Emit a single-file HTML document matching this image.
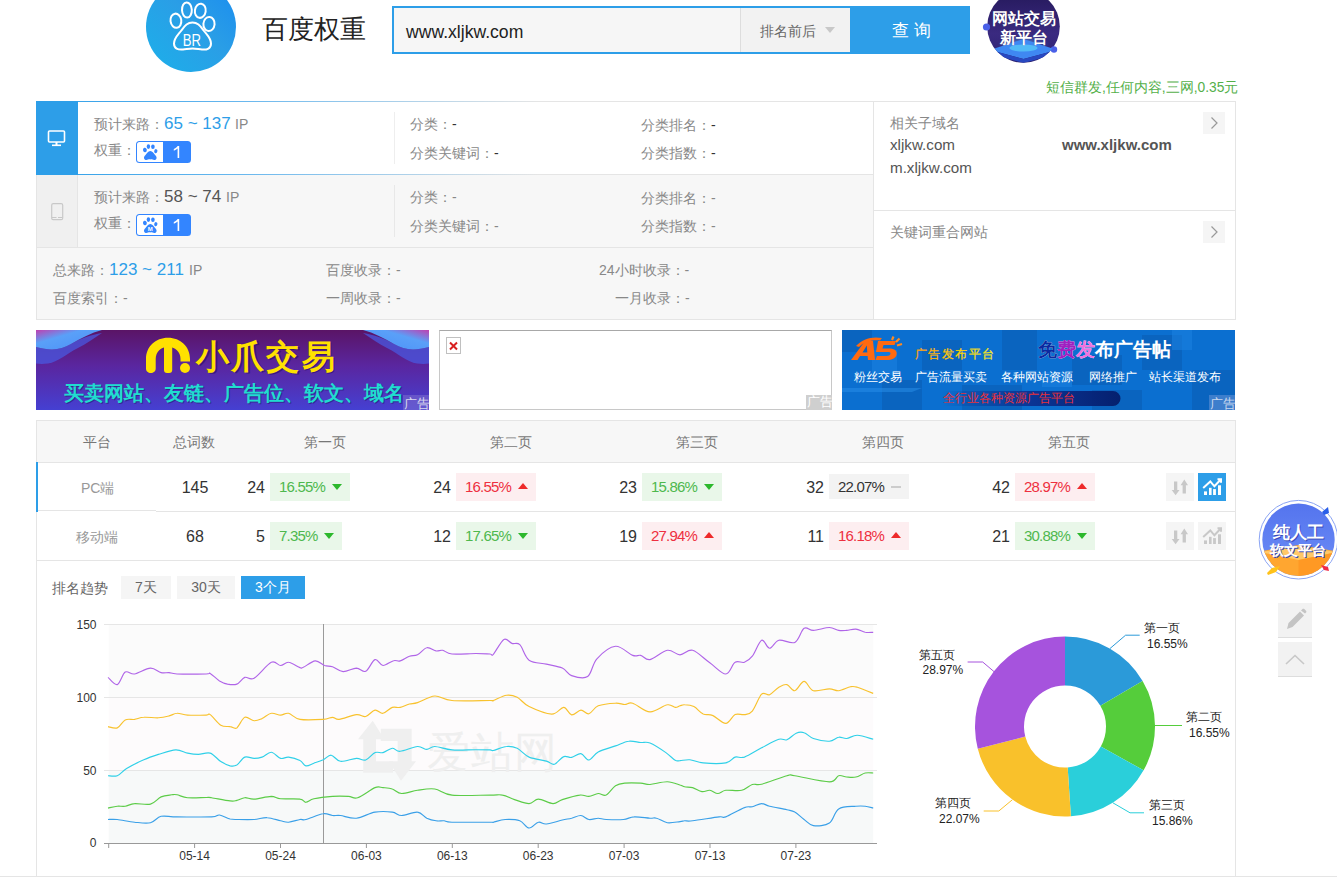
<!DOCTYPE html>
<html><head><meta charset="utf-8">
<style>
*{box-sizing:border-box;margin:0;padding:0}
html,body{width:1337px;height:885px;overflow:hidden;background:#fff}
body{position:relative;font-family:"Liberation Sans",sans-serif;color:#333;font-size:14px}
.a{position:absolute;white-space:nowrap}
.lbl{color:#888;font-size:14px;line-height:16px}
.dk{color:#333}
.th{top:433px;font-size:14px;line-height:18px;color:#777}
.plat{font-size:14px;line-height:18px;color:#999}
.num{font-size:16px;line-height:22px;color:#333}
.bd{height:28px;font-size:15px;line-height:28px;padding-left:9px;letter-spacing:-0.8px}
.bd i{position:absolute;top:11px;right:8px;width:0;height:0;border-left:5px solid transparent;border-right:5px solid transparent}
.bd.g{background:#e9f7e9;color:#4eb84e}.bd.g i{border-top:6px solid #2cb82c}
.bd.r{background:#fdeef0;color:#ee3040}.bd.r i{border-bottom:6px solid #ee2a2a;top:10px}
.bd.n{background:#f3f3f3;color:#333;height:25px;top:474px!important;line-height:25px}.bd.n i{border:none;width:10px;height:2px;background:#ccc;top:12px}
.tab{top:576px;height:23px;background:#f5f5f5;color:#666;font-size:14px;line-height:23px;text-align:center}
.tab.on{background:#2d9ee8;color:#fff}
</style></head><body>

<!-- ===== HEADER ===== -->
<div class="a" style="left:146px;top:-18px;width:90px;height:90px;border-radius:50%;background:linear-gradient(45deg,#1cb0ea 0%,#2a9ee6 55%,#1a8cf0 100%)"></div>
<svg class="a" style="left:146px;top:-18px" width="90" height="90" viewBox="0 0 90 90">
 <g fill="none" stroke="#fff" stroke-width="2">
  <ellipse cx="29.9" cy="38.7" rx="5.4" ry="7.1" transform="rotate(-8 29.9 38.7)"/>
  <ellipse cx="40.9" cy="28" rx="4.9" ry="7.6" transform="rotate(-3 40.9 28)"/>
  <ellipse cx="54.3" cy="28.8" rx="5.4" ry="7.1" transform="rotate(8 54.3 28.8)"/>
  <ellipse cx="63" cy="42" rx="5.6" ry="7.1" transform="rotate(5 63 42)"/>
  <path d="M46.5 40.4 C41 40.4 38.5 44.5 35 49 C31 54 28 56.5 28 61.5 C28 66.5 32 68 37 67.5 C40.5 67.2 43 66.5 46.5 66.5 C50 66.5 52.5 67.2 56 67.5 C61 68 65 66.5 65 61.5 C65 56.5 62 54 58 49 C54.5 44.5 52 40.4 46.5 40.4 Z"/>
 </g>
 <text x="36.7" y="64" fill="#fff" font-family="Liberation Sans" font-size="17" textLength="18.3" lengthAdjust="spacingAndGlyphs">BR</text>
</svg>
<div class="a" style="left:261.5px;top:12px;font-size:26.4px;line-height:34px;color:#222">百度权重</div>

<div class="a" style="left:392px;top:6px;width:578px;height:48px;border:2px solid #2d9ee8;background:#f6f6f6"></div>
<div class="a" style="left:406px;top:20.5px;font-size:17.6px;line-height:22px;color:#222">www.xljkw.com</div>
<div class="a" style="left:740px;top:8px;width:110px;height:44px;background:#f2f2f2;border-left:1px solid #ddd"></div>
<div class="a" style="left:760px;top:22px;font-size:14px;line-height:18px;color:#666">排名前后</div>
<div class="a" style="left:825px;top:27px;width:0;height:0;border-left:5px solid transparent;border-right:5px solid transparent;border-top:6px solid #c8c8c8"></div>
<div class="a" style="left:850px;top:6px;width:120px;height:48px;background:#2d9ee8"></div>
<div class="a" style="left:892px;top:20px;font-size:17px;line-height:22px;color:#fff">查 询</div>

<!-- badge top-right -->
<svg class="a" style="left:980px;top:-12px" width="90" height="80" viewBox="0 0 90 80">
 <defs><linearGradient id="bg1" x1="0" y1="0" x2="0" y2="1"><stop offset="0" stop-color="#24185a"/><stop offset=".6" stop-color="#3a2a80"/><stop offset="1" stop-color="#2a2070"/></linearGradient>
 <radialGradient id="glow" cx=".5" cy=".5" r=".5"><stop offset="0" stop-color="#60d0ff"/><stop offset="1" stop-color="#3a70e0" stop-opacity="0"/></radialGradient></defs>
 <circle cx="43.5" cy="38.5" r="36.3" fill="url(#bg1)"/>
 <circle cx="6.5" cy="39" r="3.6" fill="#4a60e8"/>
 <circle cx="74" cy="61.5" r="3.2" fill="#4a60e8"/>
 <clipPath id="bclip"><circle cx="43.5" cy="38.5" r="36.3"/></clipPath>
 <g clip-path="url(#bclip)">
 <ellipse cx="43.5" cy="56" rx="26" ry="9" fill="url(#glow)" opacity=".8"/>
 <path d="M10 62 L43.5 51 L77 62 L43.5 71 Z" fill="#3f88f2"/>
 <path d="M10 62 L43.5 71 L77 62 L77 66 L43.5 75 L10 66 Z" fill="#2848c0"/>
 <ellipse cx="43.5" cy="60" rx="14" ry="3.5" fill="#5ad0fa" opacity=".7"/>
 </g>
 <text x="44" y="36" text-anchor="middle" fill="#1a1040" font-weight="bold" font-size="15.5" font-family="Liberation Sans" opacity=".6">网站交易</text>
 <text x="43.5" y="35.5" text-anchor="middle" fill="#fff" font-weight="bold" font-size="15.5" font-family="Liberation Sans">网站交易</text>
 <text x="44" y="55" text-anchor="middle" fill="#1a1040" font-weight="bold" font-size="15.5" font-family="Liberation Sans" opacity=".6">新平台</text>
 <text x="43.5" y="54.5" text-anchor="middle" fill="#fff" font-weight="bold" font-size="15.5" font-family="Liberation Sans">新平台</text>
</svg>

<div class="a" style="left:1046px;top:78.5px;font-size:13.8px;line-height:18px;color:#54b04a">短信群发,任何内容,三网,0.35元</div>

<!-- ===== INFO BOX ===== -->
<div class="a" style="left:36px;top:101px;width:1200px;height:219px;border:1px solid #e5e5e5;background:#fff"></div>
<!-- PC row -->
<div class="a" style="left:36px;top:101px;width:838px;height:74px;background:#fff"></div>
<div class="a" style="left:36px;top:101px;width:838px;height:1px;background:linear-gradient(to right,#2d9ee8 0%,#6ab8ee 25%,#e5e5e5 60%)"></div>
<div class="a" style="left:36px;top:174px;width:838px;height:1px;background:linear-gradient(to right,#2d9ee8 0%,#6ab8ee 25%,#e5e5e5 60%)"></div>
<div class="a" style="left:36px;top:101px;width:42px;height:74px;background:#2d9ee8"></div>
<svg class="a" style="left:47px;top:130px" width="19" height="17" viewBox="0 0 19 17"><rect x="1.5" y="1" width="16" height="11" rx="1" fill="none" stroke="#fff" stroke-width="1.6"/><rect x="8.5" y="12" width="2" height="3" fill="#fff"/><rect x="5" y="14.5" width="9" height="1.6" fill="#fff"/></svg>
<!-- mobile row -->
<div class="a" style="left:37px;top:175px;width:836px;height:73px;background:#f7f7f7;border-bottom:1px solid #e5e5e5"></div>
<div class="a" style="left:37px;top:175px;width:40px;height:72px;background:#f0f0f0"></div>
<div class="a" style="left:77px;top:175px;width:1px;height:72px;background:#e5e5e5"></div>
<svg class="a" style="left:51px;top:203px" width="13" height="18" viewBox="0 0 13 18"><rect x="0.7" y="0.7" width="11" height="16" rx="1.5" fill="none" stroke="#c8c8c8" stroke-width="1.2"/><path d="M1 14.5 H5.5 M7 14.5 H11.5" stroke="#c8c8c8" stroke-width="1.2"/></svg>
<!-- totals row -->
<div class="a" style="left:37px;top:248px;width:836px;height:72px;background:#f7f7f7;border-bottom:1px solid #e5e5e5"></div>
<div class="a" style="left:873px;top:101px;width:1px;height:219px;background:#e5e5e5"></div>

<!-- row1 text -->
<div class="a lbl" style="left:94px;top:116px">预计来路：</div>
<div class="a" style="left:164px;top:113px;font-size:17px;line-height:22px;color:#2d9ee8">65 ~ 137</div>
<div class="a lbl" style="left:235px;top:116px">IP</div>
<div class="a lbl" style="left:94px;top:142px">权重：</div>
<svg class="a" style="left:136px;top:141px" width="56" height="22" viewBox="0 0 56 22"><rect x="0" y="0" width="55" height="22" rx="3.5" fill="#3385ff"/><path d="M3.5 1 H27 V21 H3.5 A2.5 2.5 0 0 1 1 18.5 V3.5 A2.5 2.5 0 0 1 3.5 1 Z" fill="#fff"/><g fill="#3385ff"><ellipse cx="8.9" cy="9" rx="1.9" ry="2.2" transform="rotate(-15 8.9 9)"/><ellipse cx="12.4" cy="5.6" rx="1.7" ry="2.4"/><ellipse cx="16.9" cy="5.7" rx="1.8" ry="2.3"/><ellipse cx="19.8" cy="10.2" rx="1.6" ry="2.1" transform="rotate(15 19.8 10.2)"/><path d="M14.3 10 C12 10 10.8 12.5 9.5 14 C8 15.5 7.8 16.5 8.2 17.7 C8.7 19 10.5 19.2 12 18.6 C13 18.2 13.7 18 14.3 18.4 C15 18 15.6 18.2 16.6 18.6 C18.1 19.2 19.9 19 20.4 17.7 C20.8 16.5 20.6 15.5 19.1 14 C17.8 12.5 16.6 10 14.3 10 Z"/></g><path d="M41.6 5 H43.2 V17 H41.6 V7.6 C40.6 8.6 39.3 9.3 37.8 9.7 V8.1 C39.3 7.5 40.8 6.3 41.6 5 Z" fill="#fff"/></svg>
<div class="a" style="left:394px;top:112px;width:1px;height:52px;background:#eee"></div>
<div class="a lbl" style="left:410px;top:116px">分类：<span class="dk">-</span></div>
<div class="a lbl" style="left:410px;top:145px">分类关键词：<span class="dk">-</span></div>
<div class="a lbl" style="left:641px;top:117px">分类排名：<span class="dk">-</span></div>
<div class="a lbl" style="left:641px;top:145px">分类指数：<span class="dk">-</span></div>

<!-- row2 text -->
<div class="a lbl" style="left:94px;top:189px">预计来路：</div>
<div class="a" style="left:164px;top:186px;font-size:17px;line-height:22px;color:#555">58 ~ 74</div>
<div class="a lbl" style="left:226px;top:189px">IP</div>
<div class="a lbl" style="left:94px;top:215px">权重：</div>
<svg class="a" style="left:136px;top:214px" width="56" height="22" viewBox="0 0 56 22"><rect x="0" y="0" width="55" height="22" rx="3.5" fill="#3385ff"/><path d="M3.5 1 H27 V21 H3.5 A2.5 2.5 0 0 1 1 18.5 V3.5 A2.5 2.5 0 0 1 3.5 1 Z" fill="#fff"/><g fill="#3385ff"><ellipse cx="8.9" cy="9" rx="1.9" ry="2.2" transform="rotate(-15 8.9 9)"/><ellipse cx="12.4" cy="5.6" rx="1.7" ry="2.4"/><ellipse cx="16.9" cy="5.7" rx="1.8" ry="2.3"/><ellipse cx="19.8" cy="10.2" rx="1.6" ry="2.1" transform="rotate(15 19.8 10.2)"/><path d="M14.3 10 C12 10 10.8 12.5 9.5 14 C8 15.5 7.8 16.5 8.2 17.7 C8.7 19 10.5 19.2 12 18.6 C13 18.2 13.7 18 14.3 18.4 C15 18 15.6 18.2 16.6 18.6 C18.1 19.2 19.9 19 20.4 17.7 C20.8 16.5 20.6 15.5 19.1 14 C17.8 12.5 16.6 10 14.3 10 Z"/></g><text x="14.2" y="16.8" text-anchor="middle" fill="#fff" font-size="6" font-family="Liberation Sans" font-weight="bold">M</text><path d="M41.6 5 H43.2 V17 H41.6 V7.6 C40.6 8.6 39.3 9.3 37.8 9.7 V8.1 C39.3 7.5 40.8 6.3 41.6 5 Z" fill="#fff"/></svg>
<div class="a" style="left:394px;top:185px;width:1px;height:52px;background:#e8e8e8"></div>
<div class="a lbl" style="left:410px;top:189px">分类：<span>-</span></div>
<div class="a lbl" style="left:410px;top:218px">分类关键词：<span>-</span></div>
<div class="a lbl" style="left:641px;top:190px">分类排名：<span>-</span></div>
<div class="a lbl" style="left:641px;top:218px">分类指数：<span>-</span></div>

<!-- totals text -->
<div class="a lbl" style="left:53px;top:262px">总来路：</div>
<div class="a" style="left:109px;top:259px;font-size:17px;line-height:22px;color:#2d9ee8">123 ~ 211</div>
<div class="a lbl" style="left:189px;top:262px">IP</div>
<div class="a lbl" style="left:53px;top:290px">百度索引：<span>-</span></div>
<div class="a lbl" style="left:326px;top:262px">百度收录：<span>-</span></div>
<div class="a lbl" style="left:326px;top:290px">一周收录：<span>-</span></div>
<div class="a lbl" style="left:599px;top:262px">24小时收录：<span>-</span></div>
<div class="a lbl" style="left:615px;top:290px">一月收录：<span>-</span></div>

<!-- right panel -->
<div class="a lbl" style="left:890px;top:115px">相关子域名</div>
<div class="a" style="left:1203px;top:112px;width:22px;height:22px;background:#f5f5f5"></div>
<svg class="a" style="left:1203px;top:112px" width="22" height="22" viewBox="0 0 22 22"><path d="M8.5 5.5 L14 11 L8.5 16.5" fill="none" stroke="#999" stroke-width="1.2"/></svg>
<div class="a" style="left:890px;top:136px;font-size:15.2px;line-height:18px;color:#555">xljkw.com</div>
<div class="a" style="left:1062px;top:136px;font-size:15px;line-height:18px;color:#555;font-weight:bold">www.xljkw.com</div>
<div class="a" style="left:890px;top:159px;font-size:15.2px;line-height:18px;color:#555">m.xljkw.com</div>
<div class="a" style="left:874px;top:210px;width:361px;height:1px;background:#e5e5e5"></div>
<div class="a lbl" style="left:890px;top:224px">关键词重合网站</div>
<div class="a" style="left:1203px;top:221px;width:22px;height:22px;background:#f5f5f5"></div>
<svg class="a" style="left:1203px;top:221px" width="22" height="22" viewBox="0 0 22 22"><path d="M8.5 5.5 L14 11 L8.5 16.5" fill="none" stroke="#999" stroke-width="1.2"/></svg>

<!-- ===== ADS ===== -->
<svg class="a" style="left:36px;top:330px" width="393" height="80" viewBox="0 0 393 80">
 <defs>
  <linearGradient id="ad1g" x1="0" y1="0" x2="0" y2="1"><stop offset="0" stop-color="#5a1466"/><stop offset=".45" stop-color="#5a26a0"/><stop offset="1" stop-color="#4540d2"/></linearGradient>
  <linearGradient id="wv" x1="0" y1="0" x2="1" y2="0"><stop offset="0" stop-color="#b048c8"/><stop offset=".25" stop-color="#5aa0f8"/><stop offset=".7" stop-color="#4a80f0"/><stop offset="1" stop-color="#c03aa8"/></linearGradient>
  <linearGradient id="wv2" x1="1" y1="0" x2="0" y2="0"><stop offset="0" stop-color="#c03aa8"/><stop offset=".3" stop-color="#5aa0f8"/><stop offset=".7" stop-color="#4a80f0"/><stop offset="1" stop-color="#8a40c0"/></linearGradient>
 </defs>
 <rect width="393" height="80" fill="url(#ad1g)"/>
 <linearGradient id="wvd" x1="0" y1="0" x2="1" y2="1"><stop offset="0" stop-color="#c040b0"/><stop offset=".35" stop-color="#5aa0f8"/><stop offset="1" stop-color="#4a90f8"/></linearGradient>
 <linearGradient id="wvd2" x1="1" y1="0" x2="0" y2="1"><stop offset="0" stop-color="#c040b0"/><stop offset=".35" stop-color="#5aa0f8"/><stop offset="1" stop-color="#4a90f8"/></linearGradient>
 <path d="M0 17 C15 21 25 20 35 14 C45 8 55 5 66 3 C58 8 50 14 42 18 C30 24 22 32 12 33.5 C7 34.2 3 34 0 33.5 Z" fill="#4a58e0" opacity=".75"/>
 <path d="M0 0 H66 C55 3 45 8 35 14 C25 20 15 21 0 17 Z" fill="url(#wvd)"/>
 <path d="M393 17 C378 21 368 20 358 14 C348 8 338 5 327 3 C335 8 343 14 351 18 C363 24 371 32 381 33.5 C386 34.2 390 34 393 33.5 Z" fill="#4a58e0" opacity=".75"/>
 <path d="M393 0 H327 C338 3 348 8 358 14 C368 20 378 21 393 17 Z" fill="url(#wvd2)"/>
 <g fill="#ffe100">
  <path d="M110 38.5 V29 C110 16.5 119.5 7.7 132 7.7 C144.5 7.7 154 16.5 154 29 V31.5 H144.5 V29 C144.5 22 139 16.8 132 16.8 C125 16.8 119.7 22 119.7 29 V38.5 C119.7 41.3 117.5 43 114.8 43 C112.2 43 110 41.3 110 38.5 Z"/>
  <rect x="128" y="12" width="8.2" height="31" rx="3"/>
  <circle cx="149" cy="38" r="5"/>
 </g>
 <text x="161.5" y="39" fill="#2a1060" opacity=".6" font-size="33" letter-spacing="2.2" font-weight="bold" font-family="Liberation Sans">小爪交易</text>
 <text x="160" y="37.5" fill="#ffe100" font-size="33" letter-spacing="2.2" font-weight="bold" font-family="Liberation Sans">小爪交易</text>
 <text x="28.5" y="71" fill="#2a1a70" opacity=".6" font-size="19.8" font-weight="bold" font-family="Liberation Sans">买卖网站、友链、广告位、软文、域名</text>
 <text x="27.5" y="69.5" fill="#20dcd0" font-size="19.8" font-weight="bold" font-family="Liberation Sans">买卖网站、友链、广告位、软文、域名</text>
 <rect x="367" y="65" width="26" height="15" fill="#8a7ad0" opacity=".45"/>
 <text x="367.5" y="77.5" fill="#d8d8ee" font-size="12.5" font-family="Liberation Sans">广告</text>
</svg>

<div class="a" style="left:439px;top:330px;width:393px;height:80px;border:1px solid #c8c8c8;border-top-color:#a8a8a8;background:#fff"></div>
<svg class="a" style="left:446px;top:337px" width="15" height="17" viewBox="0 0 15 17"><rect x="0.5" y="0.5" width="14" height="16" fill="#fff" stroke="#c0c0c0"/><path d="M4 5.5 L11 12.5 M11 5.5 L4 12.5" stroke="#d82020" stroke-width="2"/></svg>
<div class="a" style="left:806px;top:395px;width:26px;height:15px;background:#cfcfcf"></div>
<div class="a" style="left:806.5px;top:395px;font-size:12.5px;line-height:15px;color:#fff">广告</div>

<svg class="a" style="left:842px;top:330px" width="393" height="80" viewBox="0 0 393 80">
 <defs><linearGradient id="pill" x1="0" y1="0" x2="1" y2="0"><stop offset="0" stop-color="#0a2a8a" stop-opacity="0"/><stop offset=".5" stop-color="#0a2a8a" stop-opacity=".85"/><stop offset="1" stop-color="#05206e"/></linearGradient></defs>
 <rect width="393" height="80" fill="#0b6fd0"/>
 <g fill="#0a62bc" opacity=".8">
  <rect x="0" y="0" width="30" height="22"/><rect x="80" y="10" width="40" height="30"/><rect x="160" y="0" width="35" height="40"/>
  <rect x="230" y="25" width="50" height="30"/><rect x="300" y="5" width="40" height="35"/><rect x="350" y="40" width="43" height="40"/>
  <rect x="40" y="50" width="40" height="30"/><rect x="120" y="55" width="60" height="25"/><rect x="250" y="60" width="50" height="20"/>
 </g>
 <g fill="#1a80e0" opacity=".6">
  <rect x="30" y="20" width="25" height="25"/><rect x="200" y="42" width="30" height="15"/><rect x="330" y="0" width="20" height="20"/>
 </g>
 <path d="M0 58 H80 L70 62 H0 Z" fill="#2a90ea" opacity=".5"/>
 <g fill="#ff6a10">
  <path d="M9 30 L23 11 H31 L33 30 H26 L25.6 26 H18 L15.5 30 Z M20.5 22.5 H25.3 L24.8 15.5 Z"/>
  <path d="M36 11 H54 L52.5 15 H41.5 L40.5 18.5 H47 C53 18.5 55.5 21 54.5 25 C53.5 28.5 50 30 45 30 H33.5 L35 26 H44.5 C47 26 48 25.3 48.4 24 C48.8 22.6 48 22 45.5 22 H34 Z"/>
  <path d="M14 16 C20 9 30 6 40 8 L38 10.5 C30 9.5 22 12 17 17 Z"/>
 </g>
 <path d="M50 10 L51.5 6.5 M54 12 L57.5 8.5 M55 15.5 L60 14" stroke="#ff8a20" stroke-width="2.2"/>
 <linearGradient id="ggy" x1="0" y1="0" x2="1" y2="0"><stop offset="0" stop-color="#ff9a10"/><stop offset=".5" stop-color="#ffd000"/><stop offset="1" stop-color="#f0f020"/></linearGradient><text x="72.5" y="27.5" font-size="12" font-family="Liberation Sans" letter-spacing="1.6" fill="url(#ggy)" stroke="url(#ggy)" stroke-width="0.25">广告发布平台</text>
 <text x="196" y="25.5" font-size="18.7" font-weight="bold" font-family="Liberation Sans" fill="#fff">免费发布广告帖</text>
 <text x="196" y="25.5" font-size="18.7" font-weight="bold" font-family="Liberation Sans" fill="#0a2aa0">免</text>
 <text x="214.9" y="25.5" font-size="18.7" font-weight="bold" font-family="Liberation Sans" fill="#a020c0">费</text>
 <text x="233.6" y="25.5" font-size="18.7" font-weight="bold" font-family="Liberation Sans" fill="#f070e0">发</text>
 <text x="12" y="51" font-size="12.45" font-family="Liberation Sans" fill="#fff">粉丝交易</text>
 <text x="73.3" y="51" font-size="12.45" font-family="Liberation Sans" fill="#fff">广告流量买卖</text>
 <text x="159.3" y="51" font-size="12.45" font-family="Liberation Sans" fill="#fff">各种网站资源</text>
 <text x="246.6" y="51" font-size="12.45" font-family="Liberation Sans" fill="#fff">网络推广</text>
 <text x="307" y="51" font-size="12.45" font-family="Liberation Sans" fill="#fff">站长渠道发布</text>
 <path d="M100 61 H271 A7.5 7.5 0 0 1 271 76 H100 Z" fill="url(#pill)"/>
 <text x="101" y="72" font-size="12.25" font-family="Liberation Sans" fill="#e8303a">全行业各种资源广告平台</text>
 <rect x="367" y="65" width="26" height="15" fill="#4a84d0" opacity=".8"/>
 <text x="367.5" y="77.5" fill="#c8d8ee" font-size="12.5" font-family="Liberation Sans">广告</text>
</svg>

<!-- ===== TABLE ===== -->
<div class="a" style="left:36px;top:420px;width:1200px;height:141px;border:1px solid #e5e5e5;border-bottom:none;background:#fff"></div>
<div class="a" style="left:37px;top:421px;width:1198px;height:42px;background:#f7f7f7;border-bottom:1px solid #e5e5e5"></div>
<div class="a" style="left:156px;top:511px;width:1079px;height:1px;background:#e5e5e5"></div>
<div class="a" style="left:38px;top:510px;width:118px;height:1px;background:#e5e5e5"></div>
<div class="a" style="left:37px;top:560px;width:1198px;height:1px;background:#e5e5e5"></div>
<div class="a" style="left:36px;top:462px;width:2px;height:50px;background:#2d9ee8"></div>
<div class="a th" style="left:83px">平台</div>
<div class="a th" style="left:173px">总词数</div>
<div class="a th" style="left:304px">第一页</div>
<div class="a th" style="left:490px">第二页</div>
<div class="a th" style="left:676px">第三页</div>
<div class="a th" style="left:862px">第四页</div>
<div class="a th" style="left:1048px">第五页</div>

<div class="a plat" style="left:81px;top:479px">PC端</div>
<div class="a plat" style="left:76px;top:528px">移动端</div>
<div class="a num" style="left:160px;width:70px;text-align:center;top:477px">145</div>
<div class="a num" style="left:160px;width:70px;text-align:center;top:526px">68</div>
<div class="a num" style="left:191px;width:74px;text-align:right;top:477px">24</div>
<div class="a bd g" style="left:270px;top:473px;width:80px">16.55%<i></i></div>
<div class="a num" style="left:377px;width:74px;text-align:right;top:477px">24</div>
<div class="a bd r" style="left:456px;top:473px;width:80px">16.55%<i></i></div>
<div class="a num" style="left:563px;width:74px;text-align:right;top:477px">23</div>
<div class="a bd g" style="left:642px;top:473px;width:80px">15.86%<i></i></div>
<div class="a num" style="left:750px;width:74px;text-align:right;top:477px">32</div>
<div class="a bd n" style="left:829px;top:473px;width:80px">22.07%<i></i></div>
<div class="a num" style="left:936px;width:74px;text-align:right;top:477px">42</div>
<div class="a bd r" style="left:1015px;top:473px;width:80px">28.97%<i></i></div>
<div class="a num" style="left:191px;width:74px;text-align:right;top:526px">5</div>
<div class="a bd g" style="left:270px;top:522px;width:72px">7.35%<i></i></div>
<div class="a num" style="left:377px;width:74px;text-align:right;top:526px">12</div>
<div class="a bd g" style="left:456px;top:522px;width:80px">17.65%<i></i></div>
<div class="a num" style="left:563px;width:74px;text-align:right;top:526px">19</div>
<div class="a bd r" style="left:642px;top:522px;width:80px">27.94%<i></i></div>
<div class="a num" style="left:750px;width:74px;text-align:right;top:526px">11</div>
<div class="a bd r" style="left:829px;top:522px;width:80px">16.18%<i></i></div>
<div class="a num" style="left:936px;width:74px;text-align:right;top:526px">21</div>
<div class="a bd g" style="left:1015px;top:522px;width:80px">30.88%<i></i></div>

<div class="a" style="left:1166px;top:473px;width:28px;height:28px;background:#f5f5f5"></div>
<div class="a" style="left:1198px;top:473px;width:28px;height:28px;background:#2d9ee8"></div>
<div class="a" style="left:1166px;top:522px;width:28px;height:28px;background:#f5f5f5"></div>
<div class="a" style="left:1198px;top:522px;width:28px;height:28px;background:#f5f5f5"></div>
<svg class="a" style="left:1166px;top:473px" width="28" height="28" viewBox="0 0 28 28"><g fill="#c8c8c8"><path d="M8 8.4 H11.3 V17 H13.5 L9.6 22.2 L5.7 17 H8 Z"/><path d="M18.3 6.4 L22 12.3 H19.9 V20.4 H16.6 V12.3 H14.6 Z"/></g></svg>
<svg class="a" style="left:1166px;top:522px" width="28" height="28" viewBox="0 0 28 28"><g fill="#c8c8c8"><path d="M8 8.4 H11.3 V17 H13.5 L9.6 22.2 L5.7 17 H8 Z"/><path d="M18.3 6.4 L22 12.3 H19.9 V20.4 H16.6 V12.3 H14.6 Z"/></g></svg>
<svg class="a" style="left:1198px;top:473px;color:#fff" width="28" height="28" viewBox="0 0 28 28"><g fill="#fff"><rect x="6" y="18.4" width="3" height="3.6"/><rect x="11" y="14.8" width="2.6" height="7.2"/><rect x="15.1" y="16.1" width="2.8" height="5.9"/><rect x="20" y="12.3" width="3" height="9.7"/></g><path d="M5.2 15 L12.3 8.4 L16.4 13.3 L23 6.2 M19.5 6.2 H23 V9.7" fill="none" stroke="currentColor" stroke-width="2"/><g></g></svg>
<svg class="a" style="left:1198px;top:522px;color:#c8c8c8" width="28" height="28" viewBox="0 0 28 28"><g fill="#c8c8c8"><rect x="6" y="18.4" width="3" height="3.6"/><rect x="11" y="14.8" width="2.6" height="7.2"/><rect x="15.1" y="16.1" width="2.8" height="5.9"/><rect x="20" y="12.3" width="3" height="9.7"/></g><path d="M5.2 15 L12.3 8.4 L16.4 13.3 L23 6.2 M19.5 6.2 H23 V9.7" fill="none" stroke="currentColor" stroke-width="2"/><g></g></svg>

<!-- ===== CHART ===== -->
<div class="a" style="left:36px;top:561px;width:1200px;height:316px;border:1px solid #e5e5e5;border-top:none;background:#fff"></div>
<div class="a" style="left:52px;top:579px;font-size:14px;line-height:18px;color:#666">排名趋势</div>
<div class="a tab" style="left:121px;width:50px">7天</div>
<div class="a tab" style="left:177px;width:58px">30天</div>
<div class="a tab on" style="left:241px;width:64px">3个月</div>
<svg class="a" style="left:0;top:0" width="1337" height="885" viewBox="0 0 1337 885">
 <rect x="108.7" y="624.4" width="764.5" height="72.9" fill="#fbfbfb"/>
 <rect x="108.7" y="697.3" width="764.5" height="72.8" fill="#fdfbfc"/>
 <rect x="108.7" y="770.1" width="764.5" height="72.9" fill="#f7f9f9"/>
 <g stroke="#e6e6e6" stroke-width="1"><path d="M104 624.5 H877 M104 697.5 H877 M104 770.5 H877"/></g>
 <g fill="#efefef">
  <path d="M372.7 720.8 L384.4 739.3 H376 V761.3 H393 V772.8 H363.2 V739.3 H358 Z"/>
  <path d="M380.8 728.7 H411.7 V761.3 H416 L401 780.7 L388.8 761.3 H397.6 V741 H380.8 Z"/>
 </g>
 <text x="427" y="766.5" font-size="42.5" fill="#efefef" font-family="Liberation Sans" letter-spacing="0.5">爱站网</text>
 <path d="M323.5 624 V843" stroke="#9a9a9a" stroke-width="1"/>
 <g fill="none" stroke-width="1.15" stroke-linejoin="round">
<path d="M108.0 819.5 C109.5 819.5 112.8 819.1 117.3 819.5 C121.7 820.0 129.0 821.6 134.5 822.2 C140.1 822.7 146.0 823.7 150.5 822.7 C154.9 821.7 156.7 817.3 161.1 816.3 C165.5 815.4 168.6 816.8 177.0 816.9 C185.4 816.9 204.5 817.2 211.6 816.9 C218.6 816.5 216.4 814.6 219.5 815.0 C222.6 815.4 227.0 818.2 230.1 819.0 C233.2 819.7 234.1 819.4 238.1 819.5 C242.1 819.6 249.2 819.8 254.1 819.5 C258.9 819.2 262.9 817.4 267.3 817.7 C271.8 817.9 277.1 820.1 280.6 820.8 C284.2 821.6 285.3 822.4 288.6 822.2 C291.8 821.9 297.1 820.0 300.0 819.5 C302.9 819.1 302.1 820.5 305.9 819.5 C309.8 818.5 318.8 814.3 323.2 813.7 C327.6 813.0 329.6 815.2 332.5 815.5 C335.4 815.8 336.5 815.1 340.5 815.5 C344.4 816.0 350.6 818.8 356.4 818.2 C362.2 817.6 369.0 813.1 375.0 812.1 C381.0 811.1 387.8 811.5 392.3 812.1 C396.7 812.7 397.3 815.5 401.6 815.5 C405.8 815.5 413.3 811.6 417.5 812.1 C421.7 812.5 423.7 816.7 426.8 818.2 C429.9 819.6 433.2 820.4 436.1 820.8 C439.0 821.3 441.4 820.6 444.1 820.8 C446.7 821.1 444.4 821.9 452.0 822.2 C459.7 822.4 483.1 822.2 490.0 822.2 C496.9 822.2 490.7 822.6 493.3 822.2 C495.8 821.7 500.8 819.7 505.2 819.5 C509.7 819.3 515.9 819.4 519.8 820.8 C523.8 822.3 526.0 827.8 529.1 828.0 C532.2 828.2 535.6 822.8 538.4 822.2 C541.3 821.5 542.4 824.4 546.4 824.0 C550.4 823.7 558.1 821.0 562.3 820.0 C566.5 819.1 568.5 818.9 571.6 818.2 C574.7 817.4 578.1 815.3 580.9 815.5 C583.8 815.8 586.0 819.1 588.9 819.5 C591.8 820.0 595.3 818.2 598.2 818.2 C601.1 818.2 602.0 819.3 606.2 819.5 C610.4 819.7 618.8 820.0 623.4 819.5 C628.1 819.1 629.6 817.1 634.1 816.9 C638.5 816.6 646.2 818.0 650.0 818.2 C653.7 818.4 653.7 817.4 656.6 818.2 C659.5 818.9 663.4 822.1 667.3 822.7 C671.1 823.3 677.1 821.9 680.0 821.6 C682.9 821.3 682.5 821.0 684.6 820.8 C686.7 820.7 686.8 821.5 692.6 820.8 C698.3 820.2 713.6 817.5 719.1 816.9 C724.7 816.2 721.6 818.4 725.8 816.9 C730.0 815.3 739.9 809.2 744.4 807.6 C748.8 805.9 749.5 807.4 752.3 806.8 C755.2 806.1 758.8 803.7 761.6 803.6 C764.5 803.5 765.4 805.2 769.6 806.2 C773.8 807.3 782.7 808.7 786.9 809.7 C791.1 810.7 792.0 810.4 794.8 812.1 C797.7 813.7 801.0 817.3 804.1 819.5 C807.2 821.8 809.2 825.0 813.4 825.6 C817.6 826.2 825.2 825.8 829.4 823.0 C833.6 820.2 834.2 811.7 838.7 808.9 C843.1 806.1 851.5 806.7 855.9 806.2 C860.3 805.8 862.3 805.9 865.2 806.2 C868.1 806.5 871.9 807.8 873.2 808.1" stroke="#3aa0e8"/>
<path d="M108.0 808.1 C109.5 807.8 114.4 806.5 117.3 806.2 C120.1 805.9 122.4 806.7 125.2 806.2 C128.1 805.8 130.3 803.9 134.5 803.6 C138.7 803.2 146.0 805.2 150.5 804.1 C154.9 803.0 157.5 798.5 161.1 796.9 C164.6 795.4 169.1 795.2 171.7 794.8 C174.4 794.5 174.4 794.3 177.0 794.8 C179.7 795.3 182.8 797.3 187.6 797.7 C192.5 798.2 202.3 797.5 206.2 797.5 C210.2 797.5 207.6 797.2 211.6 797.7 C215.5 798.3 225.9 800.5 230.1 800.9 C234.4 801.4 234.4 800.9 236.8 800.4 C239.2 799.9 241.9 798.0 244.8 797.7 C247.6 797.5 249.6 799.3 254.1 799.1 C258.5 798.8 266.9 796.5 271.3 796.4 C275.7 796.4 275.8 798.4 280.6 798.8 C285.4 799.2 295.8 798.5 300.0 799.1 C304.2 799.6 303.6 802.3 305.9 802.3 C308.3 802.2 309.5 799.8 313.9 798.8 C318.3 797.8 326.7 796.8 332.5 796.4 C338.3 796.0 344.2 796.2 348.4 796.4 C352.6 796.6 353.3 799.2 357.7 797.7 C362.2 796.3 370.8 789.3 375.0 787.6 C379.2 786.0 380.1 787.4 383.0 787.6 C385.8 787.9 389.2 788.0 392.3 789.0 C395.4 789.9 397.3 793.3 401.6 793.5 C405.8 793.7 412.0 791.1 417.5 790.3 C423.0 789.5 429.0 788.2 434.8 789.0 C440.5 789.8 442.8 794.1 452.0 795.1 C461.2 796.1 481.6 795.1 490.0 795.1 C498.4 795.1 498.5 794.3 502.6 795.1 C506.7 795.8 510.1 798.2 514.5 799.6 C519.0 801.0 525.2 803.7 529.1 803.6 C533.1 803.5 534.4 799.1 538.4 799.1 C542.4 799.1 549.1 803.5 553.0 803.6 C557.0 803.7 557.9 801.0 562.3 799.6 C566.8 798.2 575.2 795.6 579.6 795.1 C584.0 794.5 585.8 796.7 588.9 796.4 C592.0 796.1 595.3 793.7 598.2 793.5 C601.1 793.3 603.3 796.4 606.2 795.1 C609.0 793.8 612.4 787.8 615.5 785.8 C618.6 783.8 620.5 783.6 624.8 783.1 C629.0 782.7 636.5 782.9 640.7 783.1 C644.9 783.3 645.6 784.7 650.0 784.5 C654.4 784.2 662.2 781.7 667.3 781.8 C672.3 781.9 677.1 784.1 680.0 785.0 C682.9 785.8 682.5 786.4 684.6 786.8 C686.7 787.3 689.7 786.8 692.6 787.6 C695.5 788.4 699.0 791.2 701.9 791.6 C704.7 792.1 707.2 790.0 709.8 790.3 C712.5 790.6 715.2 793.5 717.8 793.5 C720.5 793.5 721.8 790.8 725.8 790.3 C729.8 789.8 737.3 791.3 741.7 790.3 C746.1 789.3 749.0 785.5 752.3 784.5 C755.7 783.4 755.9 785.7 761.6 784.2 C767.4 782.7 781.3 777.1 786.9 775.7 C792.4 774.3 787.8 774.7 794.8 775.7 C801.9 776.7 822.1 781.8 829.4 781.8 C836.7 781.8 835.8 776.5 838.7 775.7 C841.5 774.9 843.7 776.8 846.6 777.0 C849.5 777.2 852.8 777.7 855.9 777.0 C859.0 776.4 862.3 773.7 865.2 773.0 C868.1 772.4 871.9 773.0 873.2 773.0" stroke="#5ccc48"/>
<path d="M108.0 775.7 C109.5 775.7 114.2 776.9 117.3 775.7 C120.4 774.5 122.1 771.2 126.6 768.5 C131.0 765.9 138.5 762.1 143.8 759.8 C149.1 757.4 153.1 756.1 158.4 754.4 C163.7 752.8 170.8 750.1 175.7 749.9 C180.6 749.7 183.9 752.4 187.6 753.1 C191.4 753.9 194.5 754.4 198.3 754.4 C202.0 754.4 206.5 751.9 210.2 753.1 C214.0 754.3 217.5 759.5 220.8 761.6 C224.2 763.7 227.5 765.3 230.1 765.9 C232.8 766.4 234.4 766.5 236.8 765.1 C239.2 763.6 241.9 758.2 244.8 757.1 C247.6 756.0 251.2 758.4 254.1 758.4 C256.9 758.4 259.1 758.1 262.0 757.1 C264.9 756.1 268.2 752.1 271.3 752.3 C274.4 752.5 277.7 757.6 280.6 758.4 C283.5 759.2 285.3 756.7 288.6 757.1 C291.8 757.5 297.1 759.1 300.0 760.6 C302.9 762.0 303.6 765.4 305.9 765.9 C308.3 766.3 311.0 764.2 313.9 763.2 C316.8 762.2 320.3 761.1 323.2 759.8 C326.1 758.4 328.3 755.0 331.2 755.2 C334.0 755.5 336.3 760.8 340.5 761.3 C344.7 761.9 352.2 758.6 356.4 758.4 C360.6 758.2 362.6 761.0 365.7 760.0 C368.8 759.0 372.1 753.8 375.0 752.6 C377.9 751.3 380.1 753.3 383.0 752.6 C385.8 751.9 389.4 748.6 392.3 748.3 C395.1 748.1 396.0 751.6 400.2 751.3 C404.4 750.9 413.1 746.8 417.5 746.5 C421.9 746.2 423.9 749.4 426.8 749.4 C429.7 749.4 430.5 746.4 434.8 746.5 C439.0 746.6 445.2 749.4 452.0 749.9 C458.9 750.5 469.6 749.7 475.9 749.7 C482.3 749.7 487.1 749.8 490.0 749.9 C492.9 750.1 490.5 751.0 493.3 750.5 C496.0 749.9 502.6 746.8 506.6 746.5 C510.5 746.1 513.4 746.6 517.2 748.3 C520.9 750.1 524.3 755.0 529.1 757.1 C534.0 759.2 542.2 759.9 546.4 761.1 C550.6 762.3 551.5 765.0 554.4 764.3 C557.2 763.5 560.8 757.7 563.7 756.6 C566.5 755.4 568.8 757.9 571.6 757.4 C574.5 756.9 578.1 753.2 580.9 753.6 C583.8 754.1 586.0 760.3 588.9 760.0 C591.8 759.8 593.8 754.4 598.2 752.1 C602.6 749.7 610.4 747.8 615.5 745.9 C620.5 744.1 624.5 741.7 628.7 741.2 C632.9 740.6 637.1 742.2 640.7 742.5 C644.2 742.8 645.8 741.3 650.0 743.0 C654.2 744.7 661.7 749.7 665.9 752.6 C670.1 755.5 672.9 759.0 675.2 760.3 C677.6 761.6 677.5 760.6 680.0 760.6 C682.5 760.5 686.1 759.4 689.9 759.8 C693.8 760.2 697.2 762.4 703.2 762.9 C709.2 763.5 720.5 763.9 725.8 762.9 C731.1 762.0 732.0 758.1 735.1 757.1 C738.2 756.1 739.9 758.6 744.4 757.1 C748.8 755.5 755.9 750.8 761.6 747.8 C767.4 744.8 774.7 740.6 778.9 739.3 C783.1 738.0 784.0 740.9 786.9 739.8 C789.7 738.8 793.3 734.4 796.2 733.2 C799.0 732.0 801.3 731.8 804.1 732.7 C807.0 733.5 809.2 737.1 813.4 738.5 C817.6 739.9 825.2 741.4 829.4 741.2 C833.6 740.9 835.8 737.6 838.7 737.2 C841.5 736.7 843.5 738.8 846.6 738.5 C849.7 738.2 852.8 735.2 857.3 735.3 C861.7 735.5 870.5 738.6 873.2 739.3" stroke="#30d0e8"/>
<path d="M108.0 726.6 C109.5 726.8 114.4 729.0 117.3 727.9 C120.1 726.8 122.4 721.3 125.2 719.9 C128.1 718.5 131.4 719.8 134.5 719.4 C137.6 718.9 139.8 717.5 143.8 717.3 C147.8 717.0 154.2 718.0 158.4 717.8 C162.6 717.6 166.0 716.7 169.1 715.9 C172.2 715.2 173.9 713.4 177.0 713.3 C180.1 713.1 182.8 714.8 187.6 715.1 C192.5 715.4 202.5 715.2 206.2 715.1 C210.0 715.0 207.8 712.9 210.2 714.6 C212.7 716.3 217.5 723.2 220.8 725.2 C224.2 727.2 227.5 726.1 230.1 726.6 C232.8 727.0 234.4 729.4 236.8 727.9 C239.2 726.3 241.9 718.5 244.8 717.3 C247.6 716.1 251.2 720.5 254.1 720.7 C256.9 720.9 259.1 719.8 262.0 718.6 C264.9 717.3 268.2 713.8 271.3 713.3 C274.4 712.7 277.7 715.1 280.6 715.1 C283.5 715.1 285.3 712.6 288.6 713.3 C291.8 714.0 294.2 718.4 300.0 719.4 C305.8 720.4 317.8 719.7 323.2 719.4 C328.6 719.0 329.8 717.3 332.5 717.3 C335.2 717.3 335.2 719.8 339.1 719.4 C343.1 718.9 352.0 715.1 356.4 714.6 C360.8 714.1 362.6 717.2 365.7 716.5 C368.8 715.7 372.1 710.6 375.0 710.1 C377.9 709.6 380.1 713.7 383.0 713.3 C385.8 712.8 389.4 708.4 392.3 707.4 C395.1 706.5 397.3 708.0 400.2 707.4 C403.1 706.9 406.6 704.8 409.5 704.0 C412.4 703.2 413.3 704.0 417.5 702.6 C421.7 701.3 429.0 696.4 434.8 696.0 C440.5 695.7 442.8 699.8 452.0 700.5 C461.2 701.3 483.1 700.5 490.0 700.5 C496.9 700.5 490.5 701.4 493.3 700.5 C496.0 699.6 502.6 695.7 506.6 695.2 C510.5 694.7 513.4 695.4 517.2 697.3 C520.9 699.2 523.4 703.8 529.1 706.6 C534.9 709.4 546.0 713.9 551.7 714.1 C557.5 714.2 560.3 707.3 563.7 707.4 C567.0 707.6 568.8 714.4 571.6 714.9 C574.5 715.3 578.1 710.3 580.9 710.1 C583.8 709.9 586.0 714.5 588.9 713.8 C591.8 713.1 593.8 707.6 598.2 705.8 C602.6 704.1 611.0 703.4 615.5 703.2 C619.9 703.0 621.9 704.5 624.8 704.5 C627.6 704.5 628.5 701.9 632.7 703.2 C636.9 704.4 644.2 711.7 650.0 711.9 C655.7 712.2 663.0 705.5 667.3 704.8 C671.5 704.0 673.1 707.3 675.2 707.4 C677.3 707.6 678.4 706.3 680.0 705.8 C681.6 705.4 682.3 704.6 684.6 704.8 C686.9 704.9 690.8 705.1 693.9 706.6 C697.0 708.2 700.1 712.6 703.2 714.1 C706.3 715.5 708.7 713.8 712.5 715.4 C716.3 716.9 722.0 723.5 725.8 723.4 C729.5 723.2 732.0 716.1 735.1 714.6 C738.2 713.1 741.5 715.2 744.4 714.6 C747.2 714.0 749.5 714.6 752.3 711.1 C755.2 707.7 758.8 696.9 761.6 694.2 C764.5 691.4 766.7 695.8 769.6 694.7 C772.5 693.5 776.0 688.9 778.9 687.2 C781.8 685.6 784.2 684.0 786.9 684.6 C789.5 685.2 792.0 691.2 794.8 690.7 C797.7 690.2 801.0 681.4 804.1 681.4 C807.2 681.4 809.2 689.5 813.4 690.7 C817.6 691.9 825.2 688.8 829.4 688.8 C833.6 688.8 835.1 691.1 838.7 690.7 C842.2 690.3 847.5 687.3 850.6 686.7 C853.7 686.1 853.5 686.1 857.3 687.2 C861.0 688.4 870.5 692.3 873.2 693.4" stroke="#f8c22e"/>
<path d="M108.0 677.4 C109.5 678.6 114.4 685.5 117.3 684.6 C120.1 683.7 122.4 673.9 125.2 672.1 C128.1 670.3 130.3 674.6 134.5 674.0 C138.7 673.3 146.0 668.3 150.5 668.1 C154.9 667.9 158.0 671.9 161.1 672.6 C164.2 673.4 166.4 672.4 169.1 672.6 C171.7 672.9 170.8 673.7 177.0 674.0 C183.2 674.2 200.7 674.1 206.2 674.0 C211.8 673.9 208.0 672.3 210.2 673.4 C212.4 674.6 216.6 679.1 219.5 680.9 C222.4 682.6 224.6 683.5 227.5 684.1 C230.4 684.6 233.9 685.2 236.8 684.1 C239.7 683.0 241.9 678.4 244.8 677.4 C247.6 676.4 249.6 680.7 254.1 678.2 C258.5 675.7 266.9 664.4 271.3 662.3 C275.7 660.2 277.7 665.5 280.6 665.5 C283.5 665.5 285.3 661.9 288.6 662.3 C291.8 662.6 297.5 666.7 300.0 667.6 C302.5 668.4 300.7 668.4 303.3 667.3 C305.8 666.2 311.7 661.3 315.2 660.9 C318.8 660.6 321.7 664.5 324.5 665.5 C327.4 666.4 329.4 665.8 332.5 666.8 C335.6 667.8 339.1 671.4 343.1 671.6 C347.1 671.8 352.6 668.2 356.4 668.1 C360.2 668.1 362.6 672.7 365.7 671.3 C368.8 669.9 372.1 660.6 375.0 659.6 C377.9 658.6 379.9 665.3 383.0 665.5 C386.1 665.6 390.7 661.4 393.6 660.7 C396.5 659.9 397.6 661.7 400.2 660.9 C402.9 660.2 406.6 657.2 409.5 656.2 C412.4 655.2 414.6 656.3 417.5 654.8 C420.4 653.4 423.7 648.3 426.8 647.7 C429.9 647.0 433.4 650.4 436.1 650.9 C438.7 651.3 440.1 649.8 442.7 650.3 C445.4 650.9 446.5 653.5 452.0 654.0 C457.6 654.6 469.6 653.5 475.9 653.5 C482.3 653.5 487.1 653.9 490.0 654.0 C492.9 654.2 491.0 656.7 493.3 654.3 C495.6 651.9 500.8 641.3 503.9 639.4 C507.0 637.6 509.2 642.5 511.9 643.4 C514.5 644.3 517.0 642.0 519.8 644.7 C522.7 647.5 524.7 656.9 529.1 660.2 C533.6 663.4 540.9 662.8 546.4 664.1 C551.9 665.5 558.1 666.2 562.3 668.1 C566.5 670.0 567.4 674.1 571.6 675.6 C575.8 677.0 583.4 679.4 587.6 676.6 C591.8 673.8 592.2 663.9 596.9 658.8 C601.5 653.8 609.5 646.9 615.5 646.3 C621.4 645.8 628.5 653.9 632.7 655.4 C636.9 656.9 637.8 654.7 640.7 655.4 C643.6 656.1 645.6 660.5 650.0 659.6 C654.4 658.8 662.2 651.1 667.3 650.3 C672.3 649.5 675.8 654.8 680.0 654.8 C684.2 654.8 687.6 649.0 692.6 650.3 C697.5 651.7 704.3 658.9 709.8 662.8 C715.4 666.7 721.6 674.1 725.8 674.0 C730.0 673.9 732.0 664.2 735.1 662.3 C738.2 660.3 741.5 663.3 744.4 662.3 C747.2 661.3 749.5 659.8 752.3 656.2 C755.2 652.5 758.8 641.6 761.6 640.2 C764.5 638.9 766.7 648.2 769.6 648.2 C772.5 648.2 774.7 641.2 778.9 640.2 C783.1 639.3 790.6 644.3 794.8 642.4 C799.0 640.4 801.0 630.3 804.1 628.3 C807.2 626.3 809.2 630.5 813.4 630.4 C817.6 630.3 825.2 627.5 829.4 627.5 C833.6 627.5 835.8 629.9 838.7 630.4 C841.5 630.9 843.7 630.6 846.6 630.4 C849.5 630.2 852.8 628.8 855.9 629.1 C859.0 629.4 862.3 631.7 865.2 632.3 C868.1 632.8 871.9 632.3 873.2 632.3" stroke="#b065e8"/>
 </g>
 <g stroke="#999" stroke-width="1" fill="none"><path d="M104 843.5 H877"/><path d="M108.7 843 V848"/><path d="M194.6 843 V848"/><path d="M280.5 843 V848"/><path d="M366.4 843 V848"/><path d="M452.3 843 V848"/><path d="M538.2 843 V848"/><path d="M624.1 843 V848"/><path d="M710.0 843 V848"/><path d="M795.9 843 V848"/></g>
 <g font-size="12" fill="#333" font-family="Liberation Sans" text-anchor="end">
  <text x="96.5" y="628.5">150</text><text x="96.5" y="701.5">100</text><text x="96.5" y="774.5">50</text><text x="96.5" y="847">0</text>
 </g>
 <g font-size="12" fill="#333" font-family="Liberation Sans" text-anchor="middle"><text x="194.6" y="860">05-14</text><text x="280.5" y="860">05-24</text><text x="366.4" y="860">06-03</text><text x="452.3" y="860">06-13</text><text x="538.2" y="860">06-23</text><text x="624.1" y="860">07-03</text><text x="710.0" y="860">07-13</text><text x="795.9" y="860">07-23</text></g>
 <path d="M1065.00 636.50 A90 90 0 0 1 1142.61 680.93 L1100.36 705.74 A41 41 0 0 0 1065.00 685.50 Z" fill="#2b9ad9" />
<path d="M1142.61 680.93 A90 90 0 0 1 1143.59 770.35 L1100.80 746.48 A41 41 0 0 0 1100.36 705.74 Z" fill="#55cd3b" />
<path d="M1143.59 770.35 A90 90 0 0 1 1070.88 816.31 L1067.68 767.41 A41 41 0 0 0 1100.80 746.48 Z" fill="#2acfda" />
<path d="M1070.88 816.31 A90 90 0 0 1 977.79 748.72 L1025.27 736.62 A41 41 0 0 0 1067.68 767.41 Z" fill="#f9c12b" />
<path d="M977.79 748.72 A90 90 0 0 1 1065.00 636.50 L1065.00 685.50 A41 41 0 0 0 1025.27 736.62 Z" fill="#a653dd" />
 <g fill="none" stroke-width="1">
  <path d="M1110 648.5 L1125.6 635.2 H1139.7" stroke="#2b9ad9"/>
  <path d="M1155 725.5 H1182" stroke="#55cd3b"/>
  <path d="M1113 802.9 L1130 812.8 H1144" stroke="#2acfda"/>
  <path d="M1012.3 799.8 L998.8 811 H983.7" stroke="#f9c12b"/>
  <path d="M994 671.6 L982.7 662 H967.6" stroke="#a653dd"/>
 </g>
 <g font-size="12" fill="#222" font-family="Liberation Sans">
  <text x="1143.5" y="632">第一页</text><text x="1147" y="647.5">16.55%</text>
  <text x="1186" y="721">第二页</text><text x="1189" y="736.5">16.55%</text>
  <text x="1148.5" y="809">第三页</text><text x="1152" y="824.5">15.86%</text>
  <text x="935" y="807">第四页</text><text x="939" y="823">22.07%</text>
  <text x="918.5" y="658.5">第五页</text><text x="922.5" y="673.5">28.97%</text>
 </g>
</svg>

<div class="a" style="left:0;top:876px;width:1337px;height:1px;background:#e5e5e5"></div>
<!-- ===== FLOAT ===== -->
<svg class="a" style="left:1256px;top:498px" width="81" height="84" viewBox="0 0 81 84">
 <defs>
  <linearGradient id="fb" x1="0" y1="0" x2="0" y2="1"><stop offset="0" stop-color="#5474ee"/><stop offset="1" stop-color="#6e8ef6"/></linearGradient>
  <clipPath id="fcl"><circle cx="42.5" cy="41.7" r="36.2"/></clipPath>
 </defs>
 <circle cx="42.5" cy="41.7" r="39.3" fill="#fff" stroke="#8aa4f4" stroke-width="1"/>
 <circle cx="42.5" cy="41.7" r="36.2" fill="url(#fb)"/>
 <g clip-path="url(#fcl)">
  <path d="M0 54 L42.5 47 L85 54 V90 H0 Z" fill="#ffa630"/>
  <path d="M4 54 L42.5 48 L81 54 L42.5 62 Z" fill="#ffc868"/>
  <path d="M42.5 62 L81 54 V90 H42.5 Z" fill="#ff9420" opacity=".7"/>
 </g>
 <path d="M66 14 L72 9 L73 15 L68 17 Z" fill="#2a5ee8"/>
 <path d="M11 75 L16 70 L24 68 L20 74 L12 77 Z" fill="#ffc21a"/>
 <path d="M65 67 L72 69 L73 73 L68 72 Z" fill="#f02a48"/>
 <g font-weight="bold" font-family="Liberation Sans" text-anchor="middle">
  <text x="43.5" y="40.5" font-size="17.3" fill="#3a4ab8">纯人工</text>
  <text x="42.5" y="39.5" font-size="17.3" fill="#fff">纯人工</text>
  <text x="43" y="58" font-size="14.2" fill="#3a4ab8">软文平台</text>
  <text x="42" y="57" font-size="14.2" fill="#fff">软文平台</text>
 </g>
</svg>
<div class="a" style="left:1278px;top:603px;width:34px;height:35px;background:#f2f2f2;border-bottom:1px solid #ddd"></div>
<svg class="a" style="left:1278px;top:603px" width="34" height="34" viewBox="0 0 34 34"><path d="M9 26 L10.5 20 L22 8.5 L26 12.5 L14.5 24 Z M23 7.5 L24.5 6 C25 5.5 25.8 5.5 26.3 6 L28 7.7 C28.5 8.2 28.5 9 28 9.5 L27 10.5 Z" fill="#c4c4c4"/></svg>
<div class="a" style="left:1278px;top:642px;width:34px;height:35px;background:#f2f2f2;border-bottom:1px solid #ddd"></div>
<svg class="a" style="left:1278px;top:642px" width="34" height="34" viewBox="0 0 34 34"><path d="M8 22 L17 13.5 L26 22" fill="none" stroke="#c8c8c8" stroke-width="1.6"/></svg>

</body></html>
